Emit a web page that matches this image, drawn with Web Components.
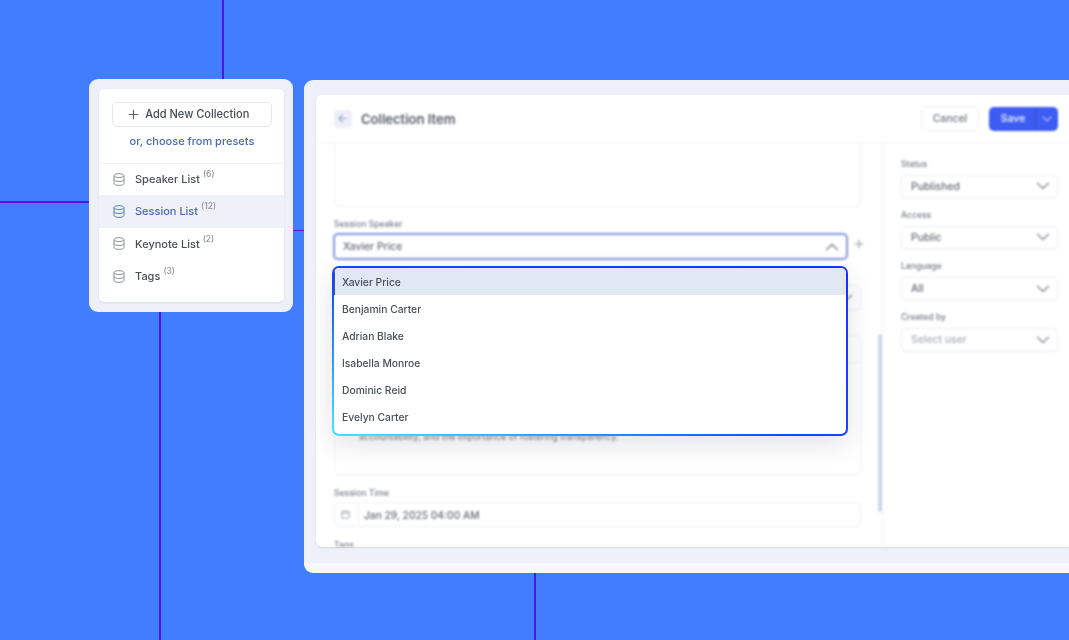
<!DOCTYPE html>
<html lang="en">
<head>
<meta charset="utf-8">
<title>Collection Item</title>
<style>
html,body{margin:0;padding:0;width:1069px;height:640px;overflow:hidden;background:#407eff;font-family:Inter,"Liberation Sans",sans-serif}
</style>
</head>
<body>
<app-stage>
  <collection-panel slot="panel">
    <list-row count="6">Speaker List</list-row>
    <list-row count="12" active>Session List</list-row>
    <list-row count="2">Keynote List</list-row>
    <list-row count="3">Tags</list-row>
  </collection-panel>
  <editor-window slot="window"></editor-window>
</app-stage>
<script>
const CHEV='<svg width="14" height="8" viewBox="0 0 14 8" fill="none" stroke="#8b909a" stroke-width="1.4" stroke-linecap="round" stroke-linejoin="round"><path d="M1.5 1.2 7 6.6l5.5-5.4"/></svg>';
const CHEVUP='<svg width="14" height="8" viewBox="0 0 14 8" fill="none" stroke="#8b909a" stroke-width="1.5" stroke-linecap="round" stroke-linejoin="round"><path d="M1.5 6.8 7 1.4l5.5 5.4"/></svg>';
function el(name,fn){customElements.define(name,class extends HTMLElement{constructor(){super();this.attachShadow({mode:'open'})}connectedCallback(){this.shadowRoot.innerHTML=fn(this)}})}

el('app-stage',()=>`<style>
:host{display:block;position:relative;width:1069px;height:640px;overflow:hidden;background:#407eff}
.l{position:absolute;background:#5a10e6}
</style>
<div class="l" style="left:222px;top:0;width:2px;height:80px"></div>
<div class="l" style="left:0;top:201px;width:90px;height:1.5px"></div>
<div class="l" style="left:292px;top:229.5px;width:13px;height:1.5px"></div>
<div class="l" style="left:159px;top:311px;width:2px;height:329px"></div>
<div class="l" style="left:533.5px;top:572px;width:2px;height:68px"></div>
<slot name="window"></slot><slot name="panel"></slot>`);

el('collection-panel',()=>`<style>
:host{display:block;position:absolute;left:89px;top:79px;width:204px;height:233px;box-sizing:border-box;padding:10px 9px 10px 10px;background:#edf1f7;border-radius:9px}
.card{height:213px;background:#fff;border-radius:5px;box-shadow:0 1px 2px rgba(60,70,100,.12);filter:blur(.45px);display:flex;flex-direction:column}
.top{height:74.5px;flex:none;box-sizing:border-box;padding:13px 12px 0 13px;border-bottom:1px solid #edeff3;display:flex;flex-direction:column;align-items:stretch}
.btn{height:25px;box-sizing:border-box;border:1px solid #e3e6eb;border-radius:5px;padding:0 7px 1px 0;display:flex;align-items:center;justify-content:center;gap:6.5px;font-size:11.05px;font-weight:500;color:#474c54}
.btn svg{flex:none}
.link{margin-top:7px;text-align:center;font-size:11px;font-weight:500;color:#4a67b8;line-height:14px}
.rows{display:flex;flex-direction:column;margin-top:-.5px}
</style>
<div class="card"><div class="top">
<div class="btn"><svg width="11" height="11" viewBox="0 0 11 11" stroke="#5a5f68" stroke-width="1.1"><path d="M5.5 .8v9.4M.8 5.5h9.4"/></svg>Add New Collection</div>
<div class="link">or, choose from presets</div></div>
<div class="rows"><slot></slot></div></div>`);

el('list-row',h=>{const a=h.hasAttribute('active');const c=a?'#4a67b8':'#4a4f58';const ic=a?'#5f7cc4':'#8d929b';return `<style>
:host{display:block}
.r{height:32.3px;box-sizing:border-box;padding-left:14px;display:flex;align-items:center;gap:10px;background:${a?'#eef2f8':'transparent'};color:${c};font-size:11px;font-weight:${a?500:450}}
sup{font-size:8.5px;color:#8d929b;margin-left:3px;position:relative;top:-1px;line-height:0;vertical-align:5px}
</style><div class="r"><svg width="12" height="13" viewBox="0 0 12 13" fill="none" stroke="${ic}" stroke-width="1"><ellipse cx="6" cy="2.6" rx="5" ry="2"/><path d="M1 2.6v7.8c0 1.1 2.2 2 5 2s5-.9 5-2V2.6M1 6.5c0 1.1 2.2 2 5 2s5-.9 5-2"/></svg><span><slot></slot><sup>(${h.getAttribute('count')})</sup></span></div>`});

el('form-label',()=>`<style>:host{display:block;height:10px;line-height:10px;font-size:8.6px;color:#777c85;font-weight:500}</style><slot></slot>`);

el('select-box',h=>{const up=h.hasAttribute('open');return `<style>
:host{display:block;box-sizing:border-box;height:${h.getAttribute('h')||23}px;border:${up?'2px solid #8296e2':'1px solid #eff1f4'};border-radius:${up?5:4}px;background:#fff;box-shadow:${up?'none':'0 1px 1px rgba(40,50,80,.04)'}}
.i{height:100%;display:flex;align-items:center;justify-content:space-between;padding:0 7px 0 ${up?8:9}px;font-size:10.4px;font-weight:450;color:${h.hasAttribute('muted')?'#a9adb5':'#666b74'}}
</style><div class="i"><span><slot></slot></span>${up?CHEVUP:CHEV}</div>`});

el('side-field',h=>`<style>:host{display:flex;flex-direction:column;gap:6px;height:51.3px}</style>
<form-label>${h.getAttribute('label')}</form-label><select-box ${h.hasAttribute('muted')?'muted':''}>${h.getAttribute('value')}</select-box>`);

el('speaker-dropdown',()=>`<style>
:host{display:block;position:absolute;left:28px;top:186px;width:516px;height:170px;box-sizing:border-box;border:2px solid transparent;border-radius:7px;
background:linear-gradient(#fff,#fff) padding-box,linear-gradient(to bottom left,#1234ff 0%,#1a44ff 55%,#45dcfa 96%) border-box;box-shadow:0 8px 26px rgba(30,40,70,.13);overflow:hidden}
div{height:27px;padding-left:8px;line-height:29px;font-size:10.3px;font-weight:450;color:#494e57}
span{filter:blur(.3px);display:inline-block}
.on{background:#e1e7f3;border-left:1px solid #3b4fa8;padding-left:7px}
</style>
<div class="on"><span>Xavier Price</span></div><div><span>Benjamin Carter</span></div><div><span>Adrian Blake</span></div><div><span>Isabella Monroe</span></div><div><span>Dominic Reid</span></div><div><span>Evelyn Carter</span></div>`);

el('editor-window',()=>`<style>
:host{display:block;position:absolute;left:304px;top:80px;width:765px;height:493px;box-sizing:border-box;padding:15px 0 16px 12px;background:#eef2f8;border-radius:9px 0 0 9px;border-bottom:10px solid #f8f9fc}
.card{position:relative;height:452px;background:#fff;border-radius:6px 0 0 6px;box-shadow:0 1px 2px rgba(60,70,100,.14)}
.blur{height:100%;filter:blur(.85px);display:flex;flex-direction:column}
header{height:48px;flex:none;box-sizing:border-box;border-bottom:1px solid #f1f3f6;display:flex;align-items:center;padding:0 11px 0 18px}
.back{width:18px;height:18px;border-radius:4px;background:#edf0f8;display:flex;align-items:center;justify-content:center;margin-right:9px}
h1{margin:0;font-size:13px;font-weight:600;color:#555a64;flex:1}
.cancel{width:58px;height:25px;box-sizing:border-box;border:1px solid #eff1f4;border-radius:5px;font-size:10.4px;font-weight:500;color:#6d727b;display:flex;align-items:center;justify-content:center;margin-right:10px}
.save{width:69px;height:24px;border-radius:5px;background:#3d5cf2;color:#dfe5fd;font-size:10.4px;font-weight:600;display:flex;align-items:center}
.save b{flex:1;text-align:center;font-weight:600;padding-left:2px}
.save i{width:22px;height:100%;border-left:1px solid #3550d8;display:flex;align-items:center;justify-content:center}
.body{flex:1;min-height:0;display:flex}
main{width:567px;box-sizing:border-box;padding:0 21px 0 18px;overflow:hidden;position:relative;border-right:1px solid #f1f3f6;flex:none}
aside{flex:1;padding:15.5px 0 0 18px}
aside>*{width:157px}
.box{border:1px solid #f1f3f6;border-top:0;border-radius:0 0 5px 5px;height:64px;box-sizing:border-box}
.sp{display:flex;align-items:flex-start;gap:6px;margin:4px 0 0 -1px}
.sp select-box{width:515px;flex:none}
.plus{flex:none;margin-top:6px}
.rich{height:140px;box-sizing:border-box;border:1px solid #f1f3f6;border-radius:5px;margin-top:25px;position:relative}
.rich .bar{height:26px;border-bottom:1px solid #f1f3f6}
.rich p{position:absolute;left:24px;top:95px;margin:0;font-size:9px;line-height:12px;color:#777c85;white-space:nowrap}
.date{height:25px;box-sizing:border-box;margin-top:4px;border:1px solid #f0f2f5;border-radius:4px;display:flex;align-items:center;font-size:10.2px;font-weight:450;color:#666b74}
.date i{width:24px;box-sizing:border-box;padding-right:3px;height:100%;border-right:1px solid #f0f2f5;display:flex;align-items:center;justify-content:center;margin-right:5px}
.thumb{position:absolute;right:0;top:191px;width:4px;height:178px;background:#cdd8ea;border-radius:2px}
</style>
<div class="card"><div class="blur">
<header>
<div class="back"><svg width="10" height="9" viewBox="0 0 10 9" fill="none" stroke="#9aa3c4" stroke-width="1.1" stroke-linecap="round" stroke-linejoin="round"><path d="M9 4.5H1M4.4 1 1 4.5 4.4 8"/></svg></div>
<h1>Collection Item</h1>
<div class="cancel">Cancel</div>
<div class="save"><b>Save</b><i><svg width="10" height="6" viewBox="0 0 10 6" fill="none" stroke="#aab8f8" stroke-width="1.2" stroke-linecap="round" stroke-linejoin="round"><path d="M1 1l4 4 4-4"/></svg></i></div>
</header>
<div class="body">
<main>
<div class="box"></div>
<form-label style="margin-top:12px">Session Speaker</form-label>
<div class="sp"><select-box open h="27">Xavier Price</select-box><svg class="plus" width="10" height="10" viewBox="0 0 10 10" stroke="#9a9ea6" stroke-width="1.2"><path d="M5 .5v9M.5 5h9"/></svg></div>
<select-box h="25" style="margin-top:25px;width:527px"></select-box>
<div class="rich"><div class="bar"></div><p>accountability, and the importance of fostering transparency.</p></div>
<form-label style="margin-top:13px">Session Time</form-label>
<div class="date"><i><svg width="9" height="9" viewBox="0 0 9 9" fill="none" stroke="#a0a4ac" stroke-width="1"><rect x=".8" y="1.2" width="7.4" height="7" rx="1"/><path d="M.8 3h7.4"/></svg></i>Jan 29, 2025 04:00 AM</div>
<form-label style="margin-top:13px">Tags</form-label>
<div class="thumb"></div>
</main>
<aside>
<side-field label="Status" value="Published"></side-field>
<side-field label="Access" value="Public"></side-field>
<side-field label="Language" value="All"></side-field>
<side-field label="Created by" value="Select user" muted></side-field>
</aside>
</div></div></div>
<speaker-dropdown></speaker-dropdown>`);
</script>
</body>
</html>
